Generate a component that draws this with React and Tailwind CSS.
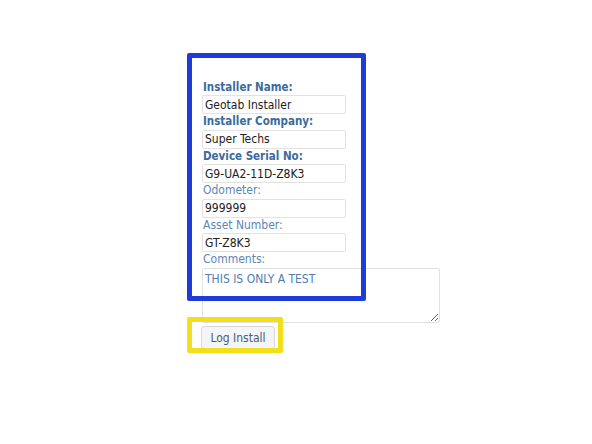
import React from "react";

const fields = [
  { label: "Installer Name:", value: "Geotab Installer", bold: true },
  { label: "Installer Company:", value: "Super Techs", bold: true },
  { label: "Device Serial No:", value: "G9-UA2-11D-Z8K3", bold: true },
  { label: "Odometer:", value: "999999" },
  { label: "Asset Number:", value: "GT-Z8K3" },
];

export default function App() {
  return (
    <div
      className="relative w-[592px] h-[444px] bg-white overflow-hidden"
      style={{ fontFamily: '"DejaVu Sans Condensed", "DejaVu Sans", Verdana, sans-serif' }}
    >
      <div className="pl-[202px] pt-[79.5px] flex flex-col items-start">
        {fields.map((f) => (
          <div key={f.label} className="flex flex-col">
            <label
              className={`leading-[15.5px] pl-[1px] ${
                f.bold ? "text-[11.5px] font-bold text-[#3b6a9e]" : "text-[12px] text-[#5d86b3]"
              }`}
            >
              {f.label}
            </label>
            <input
              readOnly
              value={f.value}
              className="w-[144px] h-[19px] px-[2px] text-[12px] text-[#222] border border-[#e2e2e2] rounded-[2px] bg-white outline-none"
            />
          </div>
        ))}
        <label className="text-[12px] leading-[15.5px] pl-[1px] text-[#5d86b3]">Comments:</label>
        <textarea
          readOnly
          value="THIS IS ONLY A TEST"
          className="w-[238px] h-[55px] px-[2px] py-[1px] text-[12px] text-[#4f7db0] border border-[#e2e2e2] rounded-[2px] bg-white outline-none resize"
        />
        <button className="mt-[3.5px] -ml-[1px] w-[74px] h-[23px] text-[12px] text-[#4a5c74] bg-[#f4f5f7] border border-[#d6d8db] rounded-[3px]">
          Log Install
        </button>
      </div>

      {/* annotation boxes */}
      <div className="absolute left-[187px] top-[53px] w-[179px] h-[248px] border-[5px] border-[#1f3bd8] rounded-[2px]" />
      <div className="absolute left-[187px] top-[317px] w-[96px] h-[36px] border-[5px] border-[#f1de1c] rounded-[2px]" />
    </div>
  );
}
